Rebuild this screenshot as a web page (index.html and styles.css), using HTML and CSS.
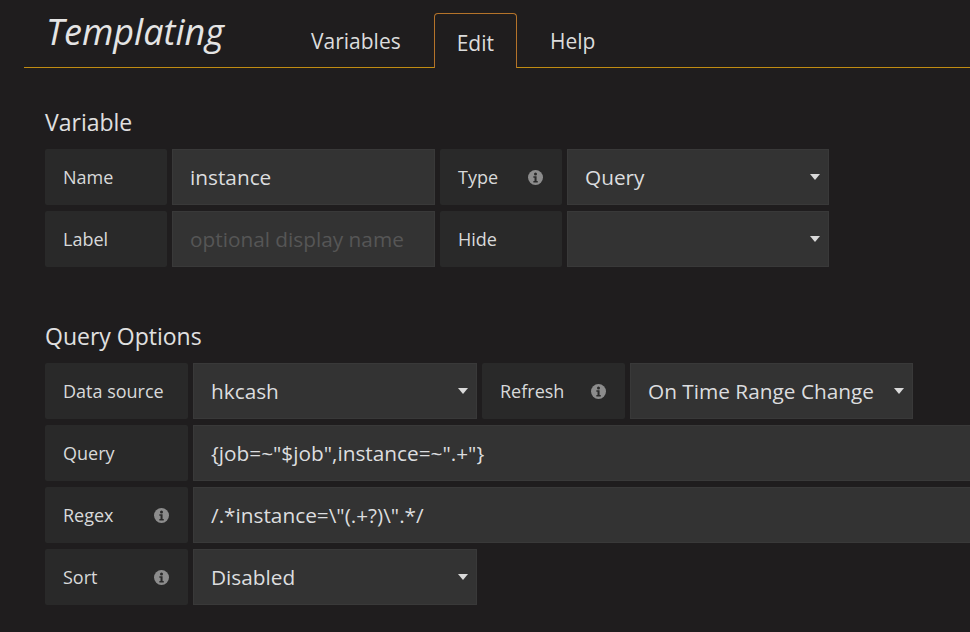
FILE: index.html
```html
<!DOCTYPE html>
<html>
<head>
<meta charset="utf-8">
<link rel="stylesheet" href="styles.css">
</head>
<body>
<div class="page">
  <header class="hdr">
    <h1 class="title">Templating</h1>
    <nav class="tabs">
      <a class="tab">Variables</a>
      <a class="tab active">Edit</a>
      <a class="tab">Help</a>
    </nav>
  </header>

  <section class="sec sec-var">
    <h2 class="sec-title">Variable</h2>
    <div class="rows">
      <div class="row">
        <span class="lbl">Name</span>
        <div class="inp">instance</div>
        <span class="lbl">Type
          <svg class="info" width="15" height="15" viewBox="0 0 14 14"><circle cx="7" cy="7" r="7" fill="#8c8c8c"/><circle cx="7" cy="3.7" r="1.4" fill="#2a2a2a"/><path d="M5 5.9h3v4.3h1.1v1.4H5v-1.4h1.1V7.3H5z" fill="#2a2a2a"/></svg>
        </span>
        <div class="sel">Query<i class="caret"></i></div>
      </div>
      <div class="row">
        <span class="lbl">Label</span>
        <div class="inp placeholder">optional display name</div>
        <span class="lbl">Hide</span>
        <div class="sel"><span></span><i class="caret"></i></div>
      </div>
    </div>
  </section>

  <section class="sec sec-query">
    <h2 class="sec-title">Query Options</h2>
    <div class="rows">
      <div class="row">
        <span class="lbl">Data source</span>
        <div class="sel">hkcash<i class="caret"></i></div>
        <span class="lbl">Refresh
          <svg class="info" width="15" height="15" viewBox="0 0 14 14"><circle cx="7" cy="7" r="7" fill="#8c8c8c"/><circle cx="7" cy="3.7" r="1.4" fill="#2a2a2a"/><path d="M5 5.9h3v4.3h1.1v1.4H5v-1.4h1.1V7.3H5z" fill="#2a2a2a"/></svg>
        </span>
        <div class="sel sel-wide">On Time Range Change<i class="caret"></i></div>
      </div>
      <div class="row">
        <span class="lbl">Query</span>
        <div class="inp inp-long">{job=~"$job",instance=~".+"}</div>
      </div>
      <div class="row">
        <span class="lbl">Regex
          <svg class="info" width="15" height="15" viewBox="0 0 14 14"><circle cx="7" cy="7" r="7" fill="#8c8c8c"/><circle cx="7" cy="3.7" r="1.4" fill="#2a2a2a"/><path d="M5 5.9h3v4.3h1.1v1.4H5v-1.4h1.1V7.3H5z" fill="#2a2a2a"/></svg>
        </span>
        <div class="inp inp-long">/.*instance=\"(.+?)\".*/</div>
      </div>
      <div class="row">
        <span class="lbl">Sort
          <svg class="info" width="15" height="15" viewBox="0 0 14 14"><circle cx="7" cy="7" r="7" fill="#8c8c8c"/><circle cx="7" cy="3.7" r="1.4" fill="#2a2a2a"/><path d="M5 5.9h3v4.3h1.1v1.4H5v-1.4h1.1V7.3H5z" fill="#2a2a2a"/></svg>
        </span>
        <div class="sel">Disabled<i class="caret"></i></div>
      </div>
    </div>
  </section>
</div>
</body>
</html>
```

FILE: styles.css
```css
html, body {
  margin: 0;
  padding: 0;
  background: #1f1d1e;
  overflow: hidden;
}

body {
  width: 970px;
  height: 632px;
  font-family: "Open Sans", "DejaVu Sans", sans-serif;
  color: #d8d9da;
}

.page {
  width: 970px;
}

.hdr {
  display: flex;
  align-items: flex-end;
  height: 67px;
  margin-left: 24px;
  padding-left: 22px;
  border-bottom: 1px solid #c08c12;
}

.title {
  align-self: flex-start;
  flex: 0 0 242px;
  margin: 12px 0 0 0;
  font-size: 36px;
  line-height: 40px;
  font-style: italic;
  font-weight: 400;
  color: #e4e4e4;
}

.tabs {
  display: flex;
  align-items: flex-end;
  gap: 10px;
}

.tab {
  display: flex;
  align-items: center;
  height: 55px;
  padding: 0 22px;
  margin-bottom: -1px;
  border: 1px solid transparent;
  border-bottom: 0;
  border-radius: 4px 4px 0 0;
  font-size: 21px;
  color: #dcdcdc;
  box-sizing: border-box;
}

.tab.active {
  border-color: #b4732a;
  background: #1f1d1e;
  padding-top: 3px;
}

.sec {
  padding-left: 45px;
}

.sec-var {
  padding-top: 41px;
}

.sec-query {
  padding-top: 56px;
}

.sec-title {
  margin: 0 0 13px 0;
  font-size: 23px;
  line-height: 27px;
  font-weight: 400;
  color: #e0e0e0;
}

.rows {
  display: flex;
  flex-direction: column;
  gap: 6px;
}

.row {
  display: flex;
  gap: 5px;
  height: 56px;
}

.row > * {
  flex-shrink: 0;
}

.lbl {
  display: flex;
  align-items: center;
  justify-content: space-between;
  box-sizing: border-box;
  width: 122px;
  padding: 0 19px 0 18px;
  background: #292929;
  font-size: 18px;
  color: #d8d9da;
  border-radius: 2px;
}

.sec-query .lbl {
  width: 143px;
}

.inp, .sel {
  display: flex;
  align-items: center;
  box-sizing: border-box;
  width: 263px;
  padding: 0 17px;
  background: #333333;
  border: 1px solid #393939;
  font-size: 20.8px;
  color: #dcdddf;
  white-space: nowrap;
}

.sel {
  width: 262px;
  justify-content: space-between;
  padding-right: 8px;
}

.sec-query .sel {
  width: 284px;
}

.sec-query .sel.sel-wide {
  width: 283px;
}

.inp-long {
  width: 800px;
}

.placeholder {
  color: #565656;
}

.caret {
  display: block;
  width: 0;
  height: 0;
  border-left: 5px solid transparent;
  border-right: 5px solid transparent;
  border-top: 6px solid #dadada;
}

.info {
  display: block;
  flex: 0 0 auto;
}
```
